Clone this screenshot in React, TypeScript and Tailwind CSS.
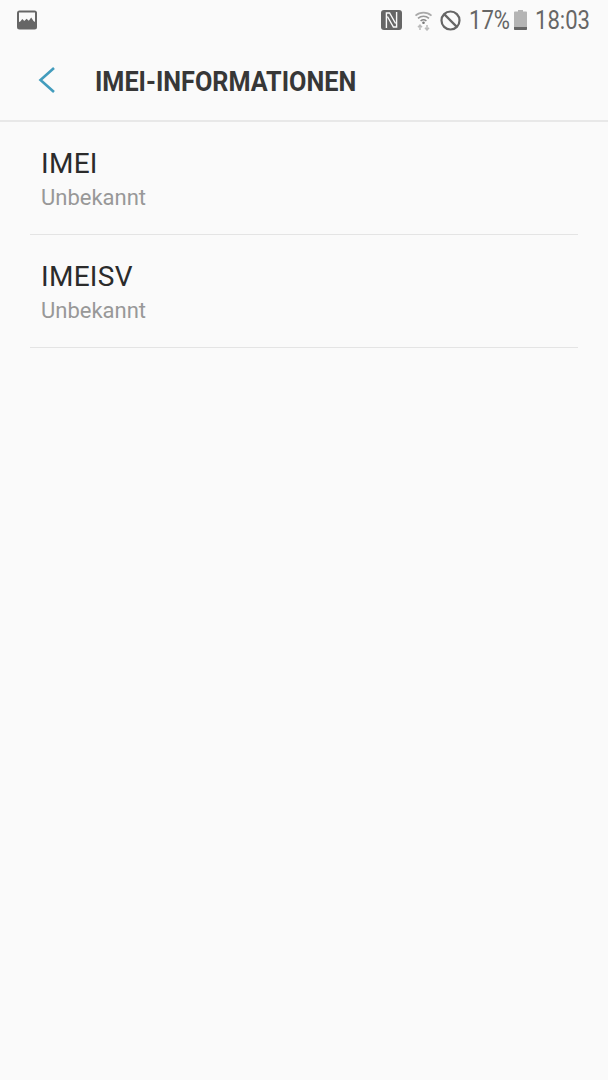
import React from "react";

function GalleryIcon() {
  return (
    <svg width="20" height="20" viewBox="0 0 20 20">
      <rect x="0" y="0.5" width="20" height="19" rx="2.5" fill="#666" />
      <path d="M2 2.5h16v9.6l-1.5-1-2.3-3.6-2.4 3.2-2.2-2-2.3 2.4-2-2.2-2 2.6L2 12z" fill="#fafafa" />
    </svg>
  );
}

function NfcIcon() {
  return (
    <svg width="21" height="20" viewBox="0 0 21 20">
      <rect x="0" y="0" width="21" height="20" rx="3" fill="#666" />
      <path d="M5.4 18V3h3.2l6 10.5" fill="none" stroke="#fafafa" strokeWidth="1.4" />
      <path d="M15.6 2v15h-3.2l-6-10.5" fill="none" stroke="#fafafa" strokeWidth="1.4" />
    </svg>
  );
}

function WifiIcon() {
  return (
    <svg width="19" height="21" viewBox="0 0 19 21" fill="none">
      <path d="M1.5 5.6C6 1.6 13 1.6 17.5 5.6" stroke="#aaa" strokeWidth="1.6" />
      <path d="M4 8.4C7.2 5.6 11.8 5.6 15 8.4" stroke="#999" strokeWidth="1.6" />
      <path d="M6.6 11c1.8-1.5 4-1.5 5.8 0" stroke="#888" strokeWidth="1.6" />
      <circle cx="9.5" cy="12.8" r="1.3" fill="#777" />
      <path d="M6 15v5M4 17.2 6 15l2 2.2M13 20v-5M11 17.8 13 20l2-2.2" stroke="#bbb" strokeWidth="1.5" />
    </svg>
  );
}

function BlockIcon() {
  return (
    <svg width="21" height="21" viewBox="0 0 21 21" fill="none" stroke="#666" strokeWidth="2.2">
      <circle cx="10.5" cy="10.5" r="9" />
      <path d="M4.4 4.4 16.6 16.6" />
    </svg>
  );
}

function BatteryIcon() {
  return (
    <svg width="13" height="20" viewBox="0 0 13 20">
      <path d="M4 0h5v1.6h3.2a.8.8 0 0 1 .8.8V17H0V2.4a.8.8 0 0 1 .8-.8H4z" fill="#b4b4b4" />
      <path d="M0 17h13v2.2a.8.8 0 0 1-.8.8H.8a.8.8 0 0 1-.8-.8z" fill="#666" />
    </svg>
  );
}

function StatusText({ children, className }: { children: string; className: string }) {
  return (
    <span className={`origin-left scale-x-[0.85] whitespace-nowrap text-[26px] leading-[32px] text-[#666] ${className}`}>
      {children}
    </span>
  );
}

function InfoRow({ label, value }: { label: string; value: string }) {
  return (
    <div className="flex h-[113px] flex-col border-b border-[#e4e4e4] pl-[11px]">
      <div className="mt-[24px] text-[28px] leading-[36px] tracking-[0.3px] text-[#2b2b2b]">{label}</div>
      <div className="mt-[1px] text-[22px] leading-[30px] text-[#989898]">{value}</div>
    </div>
  );
}

export default function App() {
  return (
    <div className="flex h-[1080px] w-[608px] flex-col overflow-hidden bg-[#fafafa] font-['Roboto',sans-serif]">
      <div className="flex h-[40px] items-center justify-between pl-[17px] pr-[18px]">
        <GalleryIcon />
        <div className="flex items-center">
          <NfcIcon />
          <div className="ml-[12px]">
            <WifiIcon />
          </div>
          <div className="ml-[7px]">
            <BlockIcon />
          </div>
          <StatusText className="ml-[8px] w-[40px]">17%</StatusText>
          <div className="ml-[5px]">
            <BatteryIcon />
          </div>
          <StatusText className="ml-[8px] w-[55px]">18:03</StatusText>
        </div>
      </div>

      <div className="flex h-[82px] items-center border-b-2 border-[#e8e8e8] pl-[38px]">
        <svg width="18" height="28" viewBox="0 0 18 28" fill="none">
          <path d="M16 2 2.5 14 16 26" stroke="#429cbd" strokeWidth="2.6" />
        </svg>
        <div className="ml-[39px] mt-[4px] origin-left scale-x-[0.9] whitespace-nowrap text-[28px] font-bold leading-[36px] text-[#373737]">
          IMEI-INFORMATIONEN
        </div>
      </div>

      <div className="px-[30px]">
        <InfoRow label="IMEI" value="Unbekannt" />
        <InfoRow label="IMEISV" value="Unbekannt" />
      </div>
    </div>
  );
}
